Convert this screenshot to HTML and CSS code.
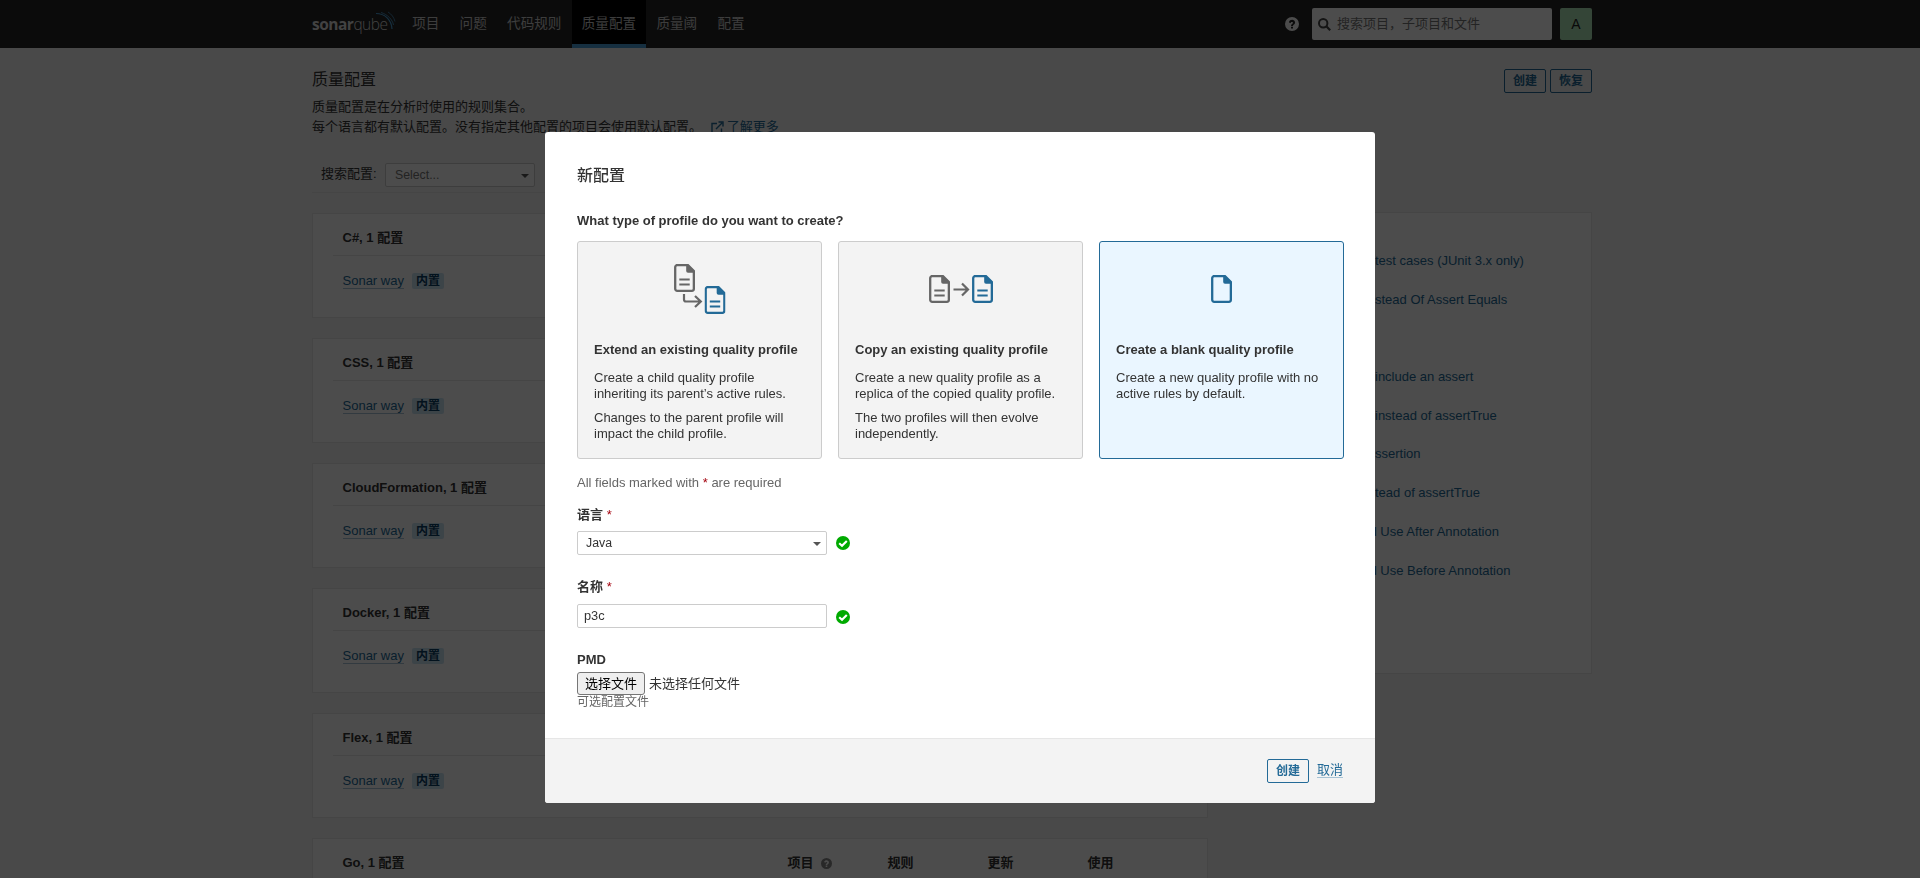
FILE: index.html
```html
<!DOCTYPE html>
<html lang="zh-CN">
<head>
<meta charset="utf-8">
<title>质量配置</title>
<link rel="stylesheet" href="styles.css">
</head>
<body>
<svg width="0" height="0" class="defs">
  <symbol id="doc" viewBox="0 0 21 28">
    <path d="M3.200 1.150H14L19.850 7V24.800a2 2 0 0 1-2 2H3.200a2 2 0 0 1-2-2V3.200a2 2 0 0 1 2-2Z" fill="none" stroke="currentColor" stroke-width="2.300"/>
    <path d="M12.200 1H14.500L20 6.500V8.800H14a1.800 1.800 0 0 1-1.800-1.800Z" fill="currentColor"/>
  </symbol>
  <symbol id="doc-lines" viewBox="0 0 21 28">
    <use href="#doc" width="21" height="28"/>
    <path d="M5.300 15.500H15.700M5.300 20.500H15.700" stroke="currentColor" stroke-width="2.200"/>
  </symbol>
  <symbol id="check" viewBox="0 0 14 14">
    <circle cx="7" cy="7" r="7" fill="#00aa00"/>
    <path d="M3.200 7.200 6 9.800 10.800 4.900" fill="none" stroke="#fff" stroke-width="2.100"/>
  </symbol>
  <symbol id="help" viewBox="0 0 14 14">
    <path fill-rule="evenodd" fill="currentColor" d="M7 0a7 7 0 1 1 0 14A7 7 0 0 1 7 0ZM6 9.700V11.600H8V9.700ZM3.900 5.200 5.400 6.200C5.800 5.500 6.200 5 6.900 5c.6 0 1.100.3 1.100.8 0 1-2 1.100-2 3.100h2c0-1.200 2.100-1.300 2.100-3.300C10.100 4 8.700 2.800 7.100 2.800 5.600 2.800 4.600 3.600 3.900 5.200Z"/>
  </symbol>
</svg>

<nav class="navbar">
  <div class="container navbar-inner">
    <a class="logo"><b>sonar</b><span>qube</span>
      <svg class="logo-waves" width="20" height="19" viewBox="0 0 20 19" fill="none" stroke="#4b9fd5">
        <path d="M0 2.500C9 2.500 15.500 9 16 18" stroke-width="1.200"/>
        <path d="M5 1.500C11.500 3.500 16.500 8.500 17.500 14" stroke-width=".8"/>
        <path d="M12 1C15.500 3 18 6.500 19 10.500" stroke-width=".7"/>
      </svg>
    </a>
    <a class="nav-item">项目</a>
    <a class="nav-item">问题</a>
    <a class="nav-item">代码规则</a>
    <a class="nav-item active">质量配置</a>
    <a class="nav-item">质量阈</a>
    <a class="nav-item">配置</a>
    <svg class="nav-help" width="14" height="14"><use href="#help"/></svg>
    <div class="search">
      <svg width="13" height="13" viewBox="0 0 13 13" fill="none" stroke="#444"><circle cx="5.200" cy="5.200" r="4.200" stroke-width="2"/><path d="M8.300 8.300 12.200 12.200" stroke-width="2.200"/></svg>
      <span>搜索项目，子项目和文件</span>
    </div>
    <div class="avatar">A</div>
  </div>
</nav>

<main class="container page">
  <header class="page-header">
    <div>
      <h1>质量配置</h1>
      <p>质量配置是在分析时使用的规则集合。</p>
      <p class="second">每个语言都有默认配置。没有指定其他配置的项目会使用默认配置。
        <a class="more"><svg width="13" height="13" viewBox="0 0 13 13" fill="none" stroke="currentColor" stroke-width="1.400"><path d="M6 2.500H1V12H10.500V7.500M5 8 11 2M7.500 1H12V5.500"/></svg>了解更多</a></p>
    </div>
    <div class="page-actions"><button class="btn">创建</button><button class="btn">恢复</button></div>
  </header>
  <div class="filter">
    <label>搜索配置:</label>
    <div class="select filter-select"><span>Select...</span><i class="caret"></i></div>
  </div>
  <div class="columns">
    <div class="profiles">
      <section class="profile"><h2>C#, 1 配置</h2><div class="row"><a>Sonar way</a><span class="badge">内置</span></div></section>
      <section class="profile"><h2>CSS, 1 配置</h2><div class="row"><a>Sonar way</a><span class="badge">内置</span></div></section>
      <section class="profile"><h2>CloudFormation, 1 配置</h2><div class="row"><a>Sonar way</a><span class="badge">内置</span></div></section>
      <section class="profile"><h2>Docker, 1 配置</h2><div class="row"><a>Sonar way</a><span class="badge">内置</span></div></section>
      <section class="profile"><h2>Flex, 1 配置</h2><div class="row"><a>Sonar way</a><span class="badge">内置</span></div></section>
      <section class="profile last">
        <h2 class="with-columns"><span class="name">Go, 1 配置</span><span class="col">项目 <svg width="11" height="11"><use href="#help"/></svg></span><span class="col">规则</span><span class="col">更新</span><span class="col">使用</span></h2>
      </section>
    </div>
    <aside class="rules">
      <a>test cases (JUnit 3.x only)</a>
      <a>stead Of Assert Equals</a>
      <a class="after-gap">include an assert</a>
      <a>instead of assertTrue</a>
      <a>ssertion</a>
      <a>tead of assertTrue</a>
      <a class="wide">d Use After Annotation</a>
      <a class="wide">d Use Before Annotation</a>
    </aside>
  </div>
</main>

<div class="overlay">
  <div class="modal">
    <div class="modal-body">
      <h2 class="modal-title">新配置</h2>
      <div class="question">What type of profile do you want to create?</div>
      <div class="cards">
        <div class="card">
          <div class="art">
            <svg width="52" height="50" viewBox="0 0 52 50" color="#666">
              <use href="#doc-lines" width="21" height="28"/>
              <path d="M10 30V35.500a2 2 0 0 0 2 2H26.500M21 32 26.800 37.500 21 43" fill="none" stroke="#666" stroke-width="2.200"/>
              <use href="#doc-lines" x="30.500" y="22" width="21" height="28" color="#236a97"/>
            </svg>
          </div>
          <h3>Extend an existing quality profile</h3>
          <p>Create a child quality profile<br>inheriting its parent’s active rules.</p>
          <p>Changes to the parent profile will<br>impact the child profile.</p>
        </div>
        <div class="card">
          <div class="art">
            <svg width="64" height="28" viewBox="0 0 64 28" color="#666">
              <use href="#doc-lines" width="21" height="28"/>
              <path d="M24.500 14.500H39M33 8.500 39 14.500 33 20.500" fill="none" stroke="#666" stroke-width="2.200"/>
              <use href="#doc-lines" x="43" width="21" height="28" color="#236a97"/>
            </svg>
          </div>
          <h3>Copy an existing quality profile</h3>
          <p>Create a new quality profile as a<br>replica of the copied quality profile.</p>
          <p>The two profiles will then evolve<br>independently.</p>
        </div>
        <div class="card selected">
          <div class="art"><svg width="21" height="28" color="#236a97"><use href="#doc"/></svg></div>
          <h3>Create a blank quality profile</h3>
          <p>Create a new quality profile with no<br>active rules by default.</p>
        </div>
      </div>
      <p class="required">All fields marked with <em>*</em> are required</p>
      <div class="label language">语言 <em>*</em></div>
      <div class="field"><div class="select"><span>Java</span><i class="caret"></i></div><svg width="14" height="14"><use href="#check"/></svg></div>
      <div class="label name-label">名称 <em>*</em></div>
      <div class="field name-field"><input class="input" type="text" value="p3c"><svg width="14" height="14"><use href="#check"/></svg></div>
      <div class="label pmd">PMD</div>
      <div class="file"><button class="file-btn">选择文件</button><span>未选择任何文件</span></div>
      <div class="hint">可选配置文件</div>
    </div>
    <footer class="modal-footer"><button class="btn">创建</button><a class="cancel">取消</a></footer>
  </div>
</div>
</body>
</html>
```
FILE: styles.css
```css
* { box-sizing: border-box; }
body, h1, h2, h3, p { margin: 0; }
body {
  height: 878px;
  overflow: hidden;
  background: #f3f3f3;
  color: #333;
  font: 13px/16px "Liberation Sans", "Noto Sans CJK SC", sans-serif;
}
button, input { font-family: inherit; }
a { color: #236a97; }
em { color: #a4030f; font-style: normal; font-weight: 400; }
.defs { position: absolute; }
.container { width: 1280px; margin: 0 auto; }

/* Top bar; the right padding stands for the scrollbar gutter */
.navbar { height: 48px; padding-right: 16px; background: #262626; }
.navbar-inner { display: flex; align-items: center; height: 48px; }
.logo {
  position: relative;
  width: 90px;
  color: #ddd;
  font: 15.500px/20px "Open Sans", sans-serif;
  letter-spacing: -0.500px;
  white-space: nowrap;
}
.logo span { font-weight: 300; }
.logo-waves { position: absolute; left: 64px; top: -3px; }
.nav-item {
  height: 48px;
  padding: 0 10.150px;
  border-bottom: 4px solid transparent;
  color: #ccc;
  font-size: 13.600px;
  line-height: 48px;
}
.nav-item.active { background: #000; border-bottom-color: #4b9fd5; }
.nav-help { margin-left: auto; margin-right: 13px; color: #fff; }
.search {
  display: flex;
  align-items: center;
  gap: 6px;
  width: 240px;
  height: 32px;
  margin-right: 8px;
  padding-left: 6px;
  border-radius: 2px;
  background: #fff;
  color: #777;
}
.avatar {
  width: 32px;
  height: 32px;
  border-radius: 2px;
  background: #b0e8b8;
  color: #222;
  font-size: 14px;
  line-height: 32px;
  text-align: center;
}

/* Page */
.page { position: relative; left: -8px; height: 830px; overflow: hidden; }
.page-header { display: flex; justify-content: space-between; height: 115px; padding-top: 20px; }
.page-header h1 { font-size: 16px; font-weight: 400; line-height: 24px; margin-bottom: 5px; }
.page-header p { line-height: 20px; }
.more { margin-left: 5px; }
.more svg { margin-right: 3px; vertical-align: -3px; }
.page-actions { display: flex; gap: 4px; padding-top: 1px; }
.btn {
  width: 42px;
  height: 24px;
  padding: 0;
  border: 1px solid #236a97;
  border-radius: 2px;
  background: transparent;
  color: #236a97;
  font-size: 12px;
  font-weight: 600;
  line-height: 20px;
}
.filter {
  display: flex;
  gap: 8px;
  width: 896px;
  height: 30px;
  padding-left: 9px;
  border-bottom: 1px solid #e6e6e6;
}
.filter label { width: 56px; line-height: 21px; white-space: nowrap; }
.select {
  display: flex;
  align-items: center;
  justify-content: space-between;
  width: 250px;
  height: 24px;
  padding: 0 5px 0 8px;
  border: 1px solid #ccc;
  border-radius: 2px;
  background: #fff;
  font-size: 12.300px;
}
.filter-select { width: 150px; padding-left: 9px; color: #777; }
.caret { border: 4px solid transparent; border-top-color: #555; border-bottom: 0; margin-top: 2px; }
.columns { display: flex; justify-content: space-between; align-items: flex-start; padding-top: 20px; }
.profiles { display: flex; flex-direction: column; gap: 20px; width: 896px; }
.profile { height: 105px; padding: 8px 20px; border: 1px solid #e6e6e6; background: #fff; }
.profile.last { height: 40px; border-bottom: 0; }
.profile h2 {
  height: 34px;
  padding: 0 9.500px;
  border-bottom: 1px solid #e6e6e6;
  font-size: 13px;
  font-weight: 600;
  line-height: 31px;
}
.profile.last h2 { height: 31px; border-bottom: 0; }
.with-columns { display: flex; }
.with-columns span { flex: none; }
.with-columns .name { width: 445px; }
.with-columns .col { width: 100px; }
.with-columns svg { margin-left: 4px; vertical-align: -2px; color: #888; }
.row { display: flex; align-items: center; gap: 8px; padding: 17px 9.500px; }
.row a { line-height: 15px; border-bottom: 1px solid #a7c3d5; }
.badge {
  width: 32px;
  border-radius: 2px;
  background: #cae3f2;
  color: #0c3f63;
  font-size: 12px;
  font-weight: 600;
  line-height: 16px;
  text-align: center;
}
.rules {
  display: flex;
  flex-direction: column;
  gap: 22.850px;
  width: 364px;
  height: 462px;
  margin-top: -1px;
  padding: 40px 0 0 146px;
  border: 1px solid #e6e6e6;
  background: #fff;
}
.rules .after-gap { margin-top: 38px; }
.rules .wide { margin-left: -5.500px; }

/* Dialog */
.overlay { position: fixed; inset: 0; padding-top: 132px; background: rgba(0, 0, 0, .7); }
.modal {
  width: 830px;
  height: 671px;
  margin: 0 auto;
  border-radius: 3px;
  background: #fff;
  overflow: hidden;
}
.modal-body { height: 606px; padding: 34px 31px 0 32px; }
.modal-title { font-size: 16px; font-weight: 500; line-height: 20px; }
.question { margin-top: 27px; font-weight: 600; }
.cards { display: grid; grid-template-columns: repeat(3, 1fr); gap: 16px; margin-top: 12px; }
.card { height: 218px; padding: 16px; border: 1px solid #ccc; border-radius: 3px; background: #f3f3f3; white-space: nowrap; }
.card.selected { border-color: #236a97; background: #eaf6ff; }
.art { display: flex; align-items: center; justify-content: center; height: 62px; margin-bottom: 22px; }
.card h3 { margin-bottom: 12px; font-size: 13px; font-weight: 600; }
.card p { margin-bottom: 8px; }
.required { margin-top: 16px; color: #666; }
.label { font-weight: 600; }
.language { margin-top: 16px; margin-bottom: 8px; }
.name-label { margin-top: 24px; margin-bottom: 9px; }
.pmd { margin-top: 24px; margin-bottom: 4px; }
.field { display: flex; align-items: center; gap: 9px; }
.name-field svg { margin-top: 2px; }
.input {
  width: 250px;
  height: 24px;
  padding: 0 6px 1px;
  border: 1px solid #ccc;
  border-radius: 2px;
  color: #333;
  font-size: 12.800px;
}
.file { display: flex; align-items: center; gap: 4px; height: 23px; }
.file-btn {
  width: 68px;
  height: 23px;
  padding: 0;
  border: 1px solid #767676;
  border-radius: 3px;
  background: #efefef;
  color: #000;
  font-size: 13px;
  line-height: 19px;
}
.hint { color: #666; font-size: 12px; line-height: 14px; }
.modal-footer {
  display: flex;
  justify-content: flex-end;
  gap: 8px;
  height: 65px;
  padding: 20px 32px;
  border-top: 1px solid #e6e6e6;
  background: #f3f3f3;
}
.cancel { height: 19px; line-height: 22px; border-bottom: 1px solid #a7c3d5; }
```
